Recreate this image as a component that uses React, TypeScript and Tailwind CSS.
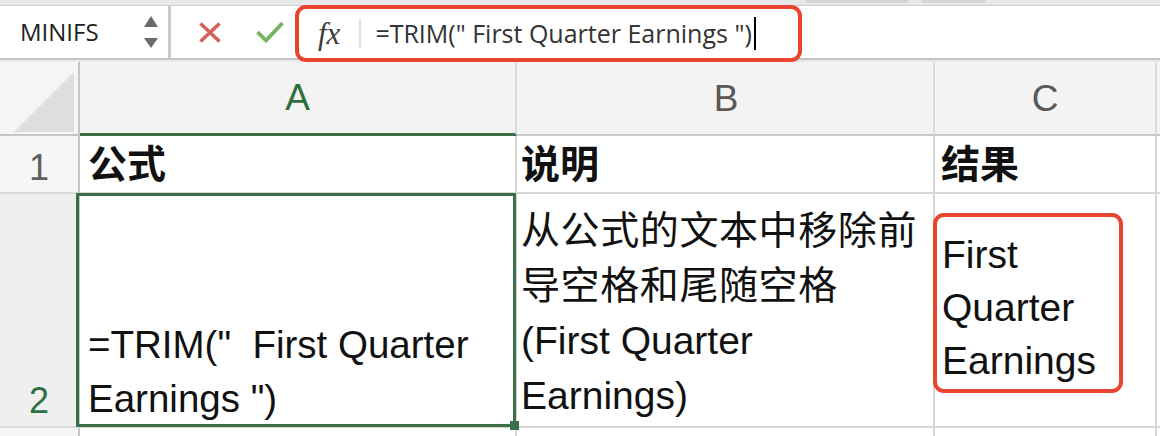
import React from 'react'

const sans = { fontFamily: '"Liberation Sans", "Noto Sans CJK SC", sans-serif' }
const ui = { fontFamily: '"Open Sans", "Noto Sans CJK SC", sans-serif' }

function Toolbar() {
  return (
    <div className="flex flex-col">
      {/* top strip with tab stubs */}
      <div className="flex h-[6px] border-b border-[#cfcfcf] bg-[#e8e8e8]">
        <div className="ml-[805px] h-[3px] w-[104px] rounded-b-[3px] bg-[#d6d6d6]" />
        <div className="ml-[12px] h-[3px] w-[65px] rounded-b-[3px] bg-[#d6d6d6]" />
      </div>

      <div className="flex h-[52px] items-stretch bg-white">
        {/* name box */}
        <div className="flex w-[171px] items-center justify-between border-r-[3px] border-[#cacaca] pl-[20px] pr-[10px]" style={ui}>
          <span className="text-[24px] leading-none text-[#222]">MINIFS</span>
          <div className="flex flex-col gap-[11px]">
            <svg width="14" height="11" viewBox="0 0 14 11">
              <polygon points="7,0 14,11 0,11" fill="#6b6b6b" />
            </svg>
            <svg width="14" height="10" viewBox="0 0 14 10">
              <polygon points="0,0 14,0 7,10" fill="#6b6b6b" />
            </svg>
          </div>
        </div>

        {/* cancel / enter */}
        <div className="flex items-center gap-[35px] pl-[28px]">
          <svg width="22" height="21" viewBox="0 0 22 21">
            <path d="M1.5 1.5 L20.5 19.5 M20.5 1.5 L1.5 19.5" stroke="#d8605b" strokeWidth="3.6" />
          </svg>
          <svg width="28" height="22" viewBox="0 0 28 22">
            <path d="M1.5 11 L10 19.5 L26.5 2" stroke="#72b360" strokeWidth="3.8" fill="none" />
          </svg>
        </div>

        {/* formula bar (outlined) */}
        <div className="relative z-10 -mb-[4px] -mt-[1px] ml-[11px] flex w-[507px] items-center rounded-[11px] border-4 border-[#e8442f] bg-white pl-[19px]">
          <span className="text-[31px] italic leading-none text-[#3c3c3c]" style={{ fontFamily: '"Liberation Serif", serif' }}>
            fx
          </span>
          <div className="ml-[19px] h-[30px] w-[2px] bg-[#e2e2e2]" />
          <span className="ml-[14px] text-[25px] leading-none text-[#333]" style={ui}>
            =TRIM(" First Quarter Earnings ")
          </span>
          <div className="ml-[2px] h-[33px] w-[2px] bg-black" />
        </div>
      </div>

      <div className="h-[4px] border-t-2 border-[#c4c4c4] bg-[#e9e9e9]" />
    </div>
  )
}

function Sheet() {
  const line = 'border-[#d6d6d6]'
  return (
    <div
      className="grid grid-cols-[80px_437px_418px_222px_1fr] grid-rows-[74px_58px_234px_1fr] h-[374px] bg-white"
      style={sans}
    >
      {/* header row */}
      <div className="relative border-b-2 border-r-2 border-[#c6c6c6] bg-[#f5f5f5]">
        <svg className="absolute left-0 top-0" width="78" height="72" viewBox="0 0 78 72">
          <polygon points="74,10 74,70 14,70" fill="#dedede" />
        </svg>
      </div>
      <div className="flex items-center justify-center border-b-[3px] border-r-2 border-b-[#3a6f47] border-r-[#dcdcdc] bg-[#f3f3f3] pb-[1px] text-[37px] leading-none text-[#2f6e3f]">
        A
      </div>
      <div className="flex items-center justify-center border-b-2 border-r-2 border-b-[#c9c9c9] border-r-[#dcdcdc] bg-[#f3f3f3] pl-[2px] text-[37px] leading-none text-[#595959]">
        B
      </div>
      <div className="flex items-center justify-center border-b-2 border-r-2 border-b-[#c9c9c9] border-r-[#dcdcdc] bg-[#f3f3f3] text-[37px] leading-none text-[#595959]">
        C
      </div>
      <div className="border-b-2 border-[#c9c9c9] bg-[#f3f3f3]" />

      {/* row 1 */}
      <div className="flex items-end justify-center border-b-2 border-r-2 border-b-[#dadada] border-r-[#c6c6c6] bg-[#f6f6f6] pb-[6px] text-[36px] leading-[36px] text-[#5f5f5f]">
        1
      </div>
      <div className={`flex items-center border-b-2 border-r-2 ${line} pl-[8px] text-[39px] font-bold leading-none text-[#111]`}>
        公式
      </div>
      <div className={`flex items-center border-b-2 border-r-2 ${line} pl-[4px] text-[39px] font-bold leading-none text-[#111]`}>
        说明
      </div>
      <div className={`flex items-center border-b-2 border-r-2 ${line} pl-[6px] text-[39px] font-bold leading-none text-[#111]`}>
        结果
      </div>
      <div className={`border-b-2 ${line}`} />

      {/* row 2 */}
      <div className="flex items-end justify-center border-b-2 border-r-2 border-b-[#dadada] border-r-[#c6c6c6] bg-[#efefef] pb-[7px] text-[36px] leading-[36px] text-[#2f6e3f]">
        2
      </div>
      <div className={`relative flex items-end border-b-2 border-r-2 ${line} pl-[8px] text-[38.5px] leading-[54px] text-[#111]`}>
        <div>
          =TRIM("&nbsp; First Quarter
          <br />
          Earnings ")
        </div>
        <div className="pointer-events-none absolute -bottom-[1px] -left-[4px] -right-[1px] -top-[1px] border-[3px] border-[#3a6f47]" />
        <div className="absolute -bottom-[4px] -right-[4px] h-[9px] w-[9px] bg-[#3a6f47]" />
      </div>
      <div className={`border-b-2 border-r-2 ${line} pl-[4px] pt-[9px] text-[39px] leading-[55px] text-[#111]`}>
        <span className="tracking-[0.6px]">从公式的文本中移除前</span>
        <br />
        <span className="tracking-[0.6px]">导空格和尾随空格</span>
        <br />
        (First Quarter
        <br />
        Earnings)
      </div>
      <div className={`border-b-2 border-r-2 ${line} pt-[19px]`}>
        <div className="-ml-[2px] h-[180px] w-[190px] rounded-[11px] border-4 border-[#e8442f] pl-[5px] pt-[11px] text-[39px] leading-[53px] text-[#111]">
          First
          <br />
          Quarter
          <br />
          Earnings
        </div>
      </div>
      <div className={`border-b-2 ${line}`} />

      {/* row 3 */}
      <div className="border-r-2 border-[#c6c6c6] bg-[#f6f6f6]" />
      <div className={`border-r-2 ${line}`} />
      <div className={`border-r-2 ${line}`} />
      <div className={`border-r-2 ${line}`} />
      <div />
    </div>
  )
}

export default function App() {
  return (
    <div className="h-[436px] w-[1160px] overflow-hidden bg-white">
      <Toolbar />
      <Sheet />
    </div>
  )
}
